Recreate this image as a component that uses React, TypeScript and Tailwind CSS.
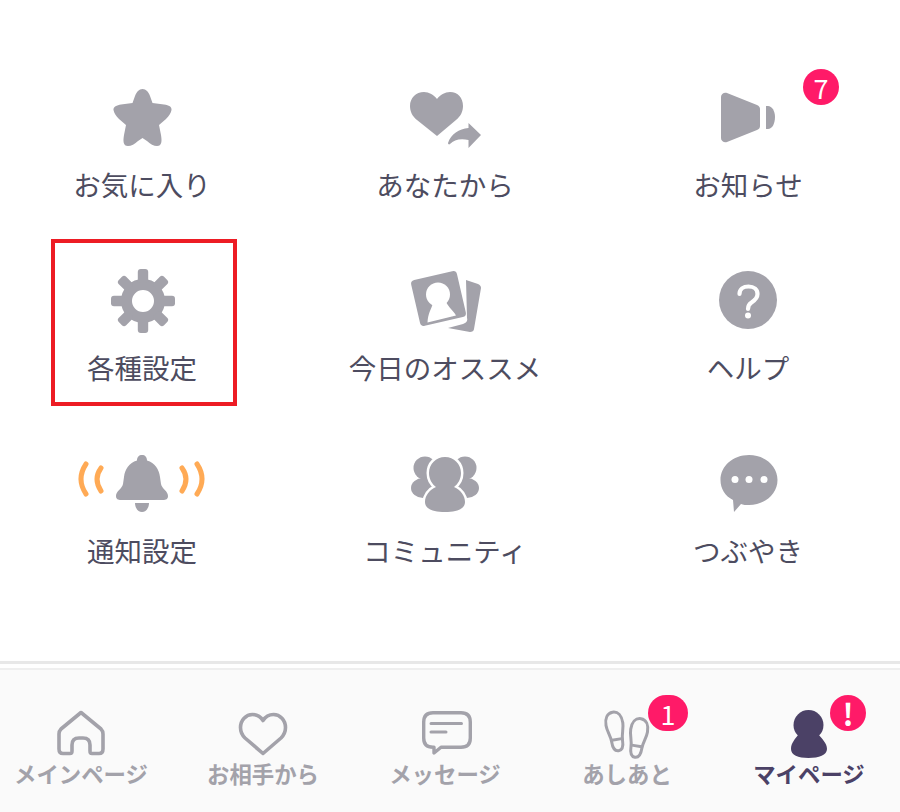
const FONT = "font-['Noto_Sans_CJK_JP','Noto_Sans',sans-serif]";
const GRAY = "#a3a2aa";

function Badge({ className, children }: { className: string; children: string }) {
  return (
    <span className={`absolute flex h-9 items-center justify-center rounded-full bg-[#ff1a68] leading-none text-white ${className}`}>
      {children}
    </span>
  );
}

// Menu icons are drawn in page-sized coordinates; each viewBox is its cell's window
function StarIcon() {
  return (
    <svg width="140" height="70" viewBox="72 83 140 70">
      <path
        transform="translate(114 89)"
        fill={GRAY}
        d="M28.5 0C32 0 34.5 3 36 7L38.5 14L50 15.5C55 16 58 18 57.5 21C57 24 55 27 52 30L45 36L47 46C48 52 48 57 43 57C40 57 36 55 33 52L28.5 49L24 52C21 55 17 57 14 57C9 57 9 52 10 46L12 36L5 30C2 27 0 24 -0.5 21C-1 18 3 16 7 15.5L18.5 14L21 7C22.5 3 25 0 28.5 0Z"
      />
    </svg>
  );
}

function HeartShareIcon() {
  return (
    <svg width="140" height="70" viewBox="375 83 140 70">
      <path fill={GRAY} d="M437 136L417 120C412 116 410 111 410 106C410 98 416 92 424 92C429 92 434 95 437 99C440 95 445 92 450 92C458 92 463 98 463 106C463 111 461 116 456 120Z" />
      <path fill={GRAY} d="M448 143C451 134 459 129 468.5 128V123L481 135L468.5 148V140C460 138 454 140 450 144C449 145 448 144 448 143Z" />
    </svg>
  );
}

function MegaphoneIcon() {
  return (
    <svg width="140" height="70" viewBox="678 83 140 70">
      <path fill={GRAY} d="M721 97C721 94 724 92 727 93L757 105C759 106 760 107 760 109V126C760 128 759 129 757 130L727 142C724 143 721 141 721 138Z" />
      <path fill={GRAY} d="M766 106H768C772 106 775 111 775 117C775 124 772 129 768 129H766Z" />
    </svg>
  );
}

function GearIcon() {
  const teeth = [0, 45, 90, 135, 180, 225, 270, 315];
  return (
    <svg width="140" height="70" viewBox="72 266 140 70">
      <circle cx="143" cy="301" r="16.5" fill="none" stroke={GRAY} strokeWidth="11" />
      {teeth.map((deg) => (
        <rect key={deg} x="137.8" y="269" width="10.4" height="14" rx="3" fill={GRAY} transform={`rotate(${deg} 143 301)`} />
      ))}
    </svg>
  );
}

function PhotosIcon() {
  return (
    <svg width="140" height="70" viewBox="375 266 140 70">
      <path fill={GRAY} d="M466 280L478 284C480 285 481 286 481 288L474 329C474 331 472 332 470 332L448 328L463 324C466 323 468 321 467 318Z" />
      <rect x="415" y="275" width="47" height="47" rx="4" fill={GRAY} transform="rotate(-13 438.500 298.500)" />
      <circle cx="438" cy="294.500" r="12" fill="#fff" />
      <path fill="#fff" d="M433 303C431 310 428 313 427.500 322.500L456 315.500C453 310 449 308 446 302Z" />
    </svg>
  );
}

function HelpIcon() {
  return (
    <svg width="140" height="70" viewBox="678 266 140 70">
      <circle cx="748" cy="300" r="29" fill={GRAY} />
      <path fill="none" stroke="#fff" strokeWidth="4.200" strokeLinecap="round" d="M739.500 294C739.500 289 743.500 286.500 748.500 286.500C754 286.500 757.500 289.500 757.500 294C757.500 298.500 754.500 300.500 751.500 302.500C749 304 748 306 748 309" />
      <circle cx="748" cy="315.500" r="3" fill="#fff" />
    </svg>
  );
}

function BellIcon() {
  return (
    <svg width="140" height="70" viewBox="72 449 140 70">
      <g fill="none" stroke="#ffaa55" strokeWidth="5" strokeLinecap="round">
        <path d="M86 464Q76 479 86 494" />
        <path d="M101 468Q93 479 101 491" />
        <path d="M197 464Q207 479 197 494" />
        <path d="M182 468Q190 479 182 491" />
      </g>
      <path fill={GRAY} d="M142 455C145 455 147 457 147 460.500C155 463 159 469 160 477L161 484C162 489 168 491 168 496C168 499 166 500 163 500H121C118 500 116 499 116 496C116 491 122 489 123 484L124 477C125 469 129 463 137 460.500C137 457 139 455 142 455Z" />
      <path fill={GRAY} d="M135 503H149C149 508 146 512 142 512C138 512 135 508 135 503Z" />
    </svg>
  );
}

function PeopleIcon() {
  return (
    <svg width="140" height="70" viewBox="375 449 140 70">
      <circle cx="425" cy="468" r="11.500" fill={GRAY} />
      <ellipse cx="423" cy="488" rx="12" ry="10" fill={GRAY} />
      <circle cx="465" cy="468" r="11.500" fill={GRAY} />
      <ellipse cx="467" cy="488" rx="12" ry="10" fill={GRAY} />
      <path
        fill={GRAY}
        stroke="#fff"
        strokeWidth="5"
        paintOrder="stroke"
        d="M445 457C454 457 461 464 461 473C461 479 458 484 454 487C461 490 465 496 465 502C465 509 457 512 445 512C433 512 425 509 425 502C425 496 429 490 436 487C432 484 429 479 429 473C429 464 436 457 445 457Z"
      />
    </svg>
  );
}

function ChatIcon() {
  return (
    <svg width="140" height="70" viewBox="678 449 140 70">
      <path fill={GRAY} d="M749 455C765 455 777.500 466 777.500 480C777.500 494 765 505 749 505C746 505 743 505 741 504L734 512L733 500C725 496 720.500 488.500 720.500 480C720.500 466 733 455 749 455Z" />
      <circle cx="735" cy="479.500" r="3.500" fill="#fff" />
      <circle cx="749" cy="479.500" r="3.500" fill="#fff" />
      <circle cx="764" cy="479.500" r="3.500" fill="#fff" />
    </svg>
  );
}

// Bottom tab icons
function HomeIcon() {
  return (
    <svg width="162" height="65" viewBox="0 695 162 65">
      <path fill="none" stroke={GRAY} strokeWidth="3.600" strokeLinejoin="round" d="M81 712.500L61 729C59.500 730.500 59 732 59 734V749C59 752 60.500 753.500 63 753.500H70C71.500 753.500 72 753 72 751V745C72 740 75 738 79 738H83C87 738 90 740 90 745V751C90 753 90.500 753.500 92 753.500H99C101.500 753.500 103 752 103 749V734C103 732 102.500 730.500 101 729Z" />
    </svg>
  );
}

function HeartIcon() {
  return (
    <svg width="162" height="65" viewBox="182 695 162 65">
      <path fill="none" stroke={GRAY} strokeWidth="3.600" strokeLinejoin="round" d="M263 753.500L245 738C242 735 240.500 731.500 240.500 727.500C240.500 720 246 714.500 252.500 714.500C257 714.500 260.500 716.500 263 720.500C265.500 716.500 269 714.500 273.500 714.500C280 714.500 285.500 720 285.500 727.500C285.500 731.500 284 735 281 738Z" />
    </svg>
  );
}

function MessageIcon() {
  return (
    <svg width="162" height="65" viewBox="364 695 162 65">
      <path fill="none" stroke={GRAY} strokeWidth="3.400" strokeLinejoin="round" d="M433 712.700H461C467 712.700 470.300 716 470.300 722V738C470.300 744 467 747.300 461 747.300H441L434 753V747.300H433C427 747.300 423.700 744 423.700 738V722C423.700 716 427 712.700 433 712.700Z" />
      <path fill={GRAY} stroke={GRAY} strokeWidth="3" strokeLinecap="round" d="M431 723.500H461.500M431 732H446" />
    </svg>
  );
}

function FootprintsIcon() {
  return (
    <svg width="162" height="65" viewBox="546 695 162 65">
      <g fill="none" stroke={GRAY} strokeWidth="3" strokeLinecap="round">
        <g transform="rotate(-9 615.500 731)">
          <path d="M615.500 712C621 712 624 717 624 724C624 730 621 735 621 741C621 747 619.500 751 615.500 751C611.500 751 610 747 610 741C610 735 607 730 607 724C607 717 610 712 615.500 712Z" />
          <path d="M610.500 739.500H620.500" />
        </g>
        <g transform="rotate(9 638 737.500)">
          <path d="M638 718.500C643.500 718.500 646.500 723.500 646.500 730.500C646.500 736.500 643.500 741.500 643.500 747.500C643.500 753.500 642 757.500 638 757.500C634 757.500 632.500 753.500 632.500 747.500C632.500 741.500 629.500 736.500 629.500 730.500C629.500 723.500 632.500 718.500 638 718.500Z" />
          <path d="M633 746H643" />
        </g>
      </g>
    </svg>
  );
}

function PersonIcon() {
  return (
    <svg width="162" height="65" viewBox="728 695 162 65">
      <circle cx="808.500" cy="725" r="15" fill="#4b4166" />
      <path fill="#4b4166" d="M799 734C795 739 791 743 791 749C791 755 798 758 808.500 758C819 758 827 755 827 749C827 743 822 739 818 734Z" />
    </svg>
  );
}

const menuItems = [
  { label: "お気に入り", icon: <StarIcon /> },
  { label: "あなたから", icon: <HeartShareIcon /> },
  { label: "お知らせ", icon: <MegaphoneIcon />, badge: "7" },
  { label: "各種設定", icon: <GearIcon />, boxed: true },
  { label: "今日のオススメ", icon: <PhotosIcon /> },
  { label: "ヘルプ", icon: <HelpIcon /> },
  { label: "通知設定", icon: <BellIcon /> },
  { label: "コミュニティ", icon: <PeopleIcon /> },
  { label: "つぶやき", icon: <ChatIcon /> },
];

const tabs = [
  { label: "メインページ", icon: <HomeIcon /> },
  { label: "お相手から", icon: <HeartIcon /> },
  { label: "メッセージ", icon: <MessageIcon /> },
  { label: "あしあと", icon: <FootprintsIcon />, badge: "1", badgeClass: "w-10 text-[27px]" },
  { label: "マイページ", icon: <PersonIcon />, badge: "!", badgeClass: "w-9 text-[30px] font-bold" },
];

export default function App() {
  return (
    <div className={`flex h-[812px] w-[900px] flex-col overflow-hidden bg-white ${FONT}`}>
      <main className="grid flex-1 grid-cols-[repeat(3,284px)] content-start gap-x-[19px] gap-y-[64px] pt-[83px]">
        {menuItems.map((item) => (
          <div key={item.label} className="relative flex flex-col items-center">
            {item.icon}
            <span className="mt-[13px] whitespace-nowrap text-[27.5px] leading-9 text-[#4d4c60]">{item.label}</span>
            {item.badge && <Badge className="top-[-14px] left-[197px] w-9 text-[27px]">{item.badge}</Badge>}
            {item.boxed && <div className="absolute top-[-27px] left-[51px] h-[167px] w-[186px] border-4 border-[#ed1c24]" />}
          </div>
        ))}
      </main>
      <div className="h-[3px] bg-[#e8e8e8]" />
      <div className="h-1 bg-white" />
      <nav className="grid h-[144px] grid-cols-[repeat(5,162px)] content-start gap-x-5 border-t-2 border-[#efefef] bg-[#fafafa] pt-[25px]">
        {tabs.map((tab) => (
          <div key={tab.label} className="relative flex flex-col items-center">
            {tab.icon}
            <span className={`whitespace-nowrap text-[22.4px] leading-[26px] font-bold ${tab.badge === "!" ? "text-[#4b4166]" : "text-[#a3a2aa]"}`}>
              {tab.label}
            </span>
            {tab.badge && <Badge className={`top-0 left-[102px] ${tab.badgeClass}`}>{tab.badge}</Badge>}
          </div>
        ))}
      </nav>
    </div>
  );
}
